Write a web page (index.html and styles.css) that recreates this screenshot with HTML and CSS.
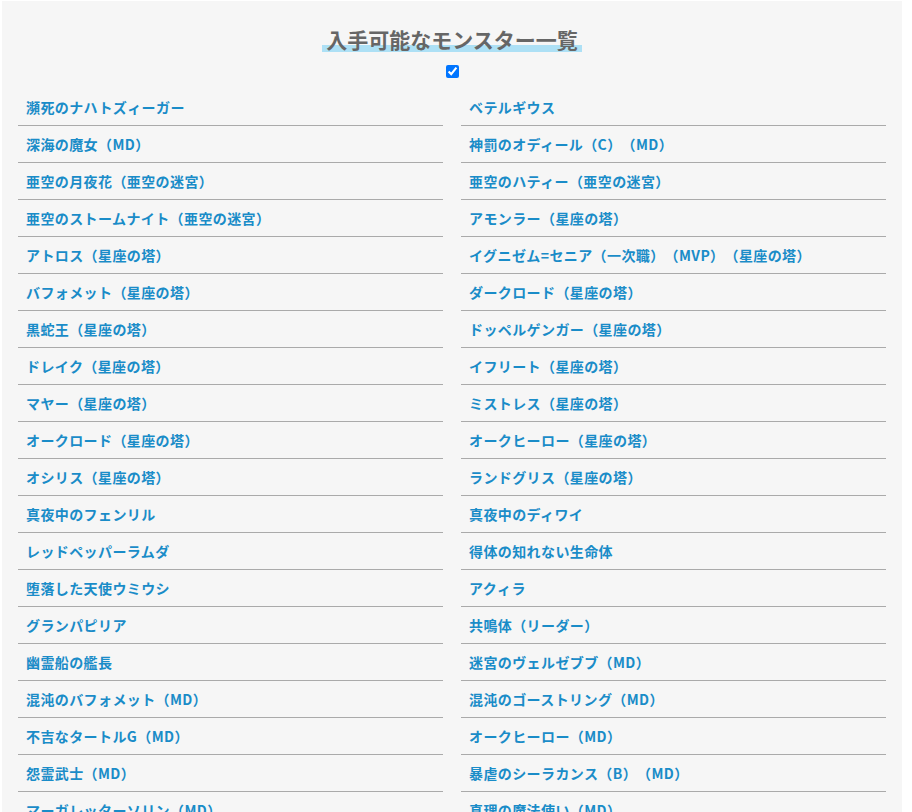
FILE: index.html
```html
<!DOCTYPE html>
<html lang="ja">
<head>
    <meta charset="UTF-8">
    <meta name="viewport" content="width=device-width, initial-scale=1.0">
    <title>入手可能なモンスター一覧</title>
    <link rel="stylesheet" href="styles.css">
</head>
<body>
    <div class="container">
        <div class="heading">
            <h2>入手可能なモンスター一覧</h2>
        </div>
        <input type="checkbox" id="showAll" class="toggle" checked>

        <ul class="monster-list">
            <li>瀕死のナハトズィーガー</li>
            <li>ベテルギウス</li>
            <li>深海の魔女（MD）</li>
            <li>神罰のオディール（C）（MD）</li>
            <li>亜空の月夜花（亜空の迷宮）</li>
            <li>亜空のハティー（亜空の迷宮）</li>
            <li>亜空のストームナイト（亜空の迷宮）</li>
            <li>アモンラー（星座の塔）</li>
            <li>アトロス（星座の塔）</li>
            <li>イグニゼム=セニア（一次職）（MVP）（星座の塔）</li>
            <li>バフォメット（星座の塔）</li>
            <li>ダークロード（星座の塔）</li>
            <li>黒蛇王（星座の塔）</li>
            <li>ドッペルゲンガー（星座の塔）</li>
            <li>ドレイク（星座の塔）</li>
            <li>イフリート（星座の塔）</li>
            <li>マヤー（星座の塔）</li>
            <li>ミストレス（星座の塔）</li>
            <li>オークロード（星座の塔）</li>
            <li>オークヒーロー（星座の塔）</li>
            <li>オシリス（星座の塔）</li>
            <li>ランドグリス（星座の塔）</li>
            <li>真夜中のフェンリル</li>
            <li>真夜中のディワイ</li>
            <li>レッドペッパーラムダ</li>
            <li>得体の知れない生命体</li>
            <li>堕落した天使ウミウシ</li>
            <li>アクィラ</li>
            <li>グランパピリア</li>
            <li>共鳴体（リーダー）</li>
            <li>幽霊船の艦長</li>
            <li>迷宮のヴェルゼブブ（MD）</li>
            <li>混沌のバフォメット（MD）</li>
            <li>混沌のゴーストリング（MD）</li>
            <li>不吉なタートルG（MD）</li>
            <li>オークヒーロー（MD）</li>
            <li>怨霊武士（MD）</li>
            <li>暴虐のシーラカンス（B）（MD）</li>
            <li>マーガレッターソリン（MD）</li>
            <li>真理の魔法使い（MD）</li>
        </ul>
    </div>
</body>
</html>
```

FILE: styles.css
```css
body { margin: 0; padding: 1px 10px 0 2px; background: #fff; font-family: "Noto Sans CJK JP", "Noto Sans", sans-serif; text-spacing-trim: space-all; }
.container { width: 868px; background: #f6f6f6; padding: 25px 16px 20px; }
.heading { text-align: center; line-height: 26px; }
h2 { display: inline-block; vertical-align: top; margin: 0; padding: 0 4px; font-size: 21px; line-height: 26px; font-weight: bold; color: #666; background: linear-gradient(transparent 73%, #ade0f5 73%); }
.toggle { display: block; width: 13px; height: 13px; margin: 13px auto 0; }
.monster-list { list-style: none; margin: 11px 0 0; padding: 0; display: grid; grid-template-columns: 1fr 1fr; column-gap: 18px; }
.monster-list li { height: 36px; line-height: 36px; padding: 0 8px; border-bottom: 1px solid #aaa; font-size: 14px; font-weight: bold; letter-spacing: 0.4px; color: #1a8cc8; white-space: nowrap; }
```
